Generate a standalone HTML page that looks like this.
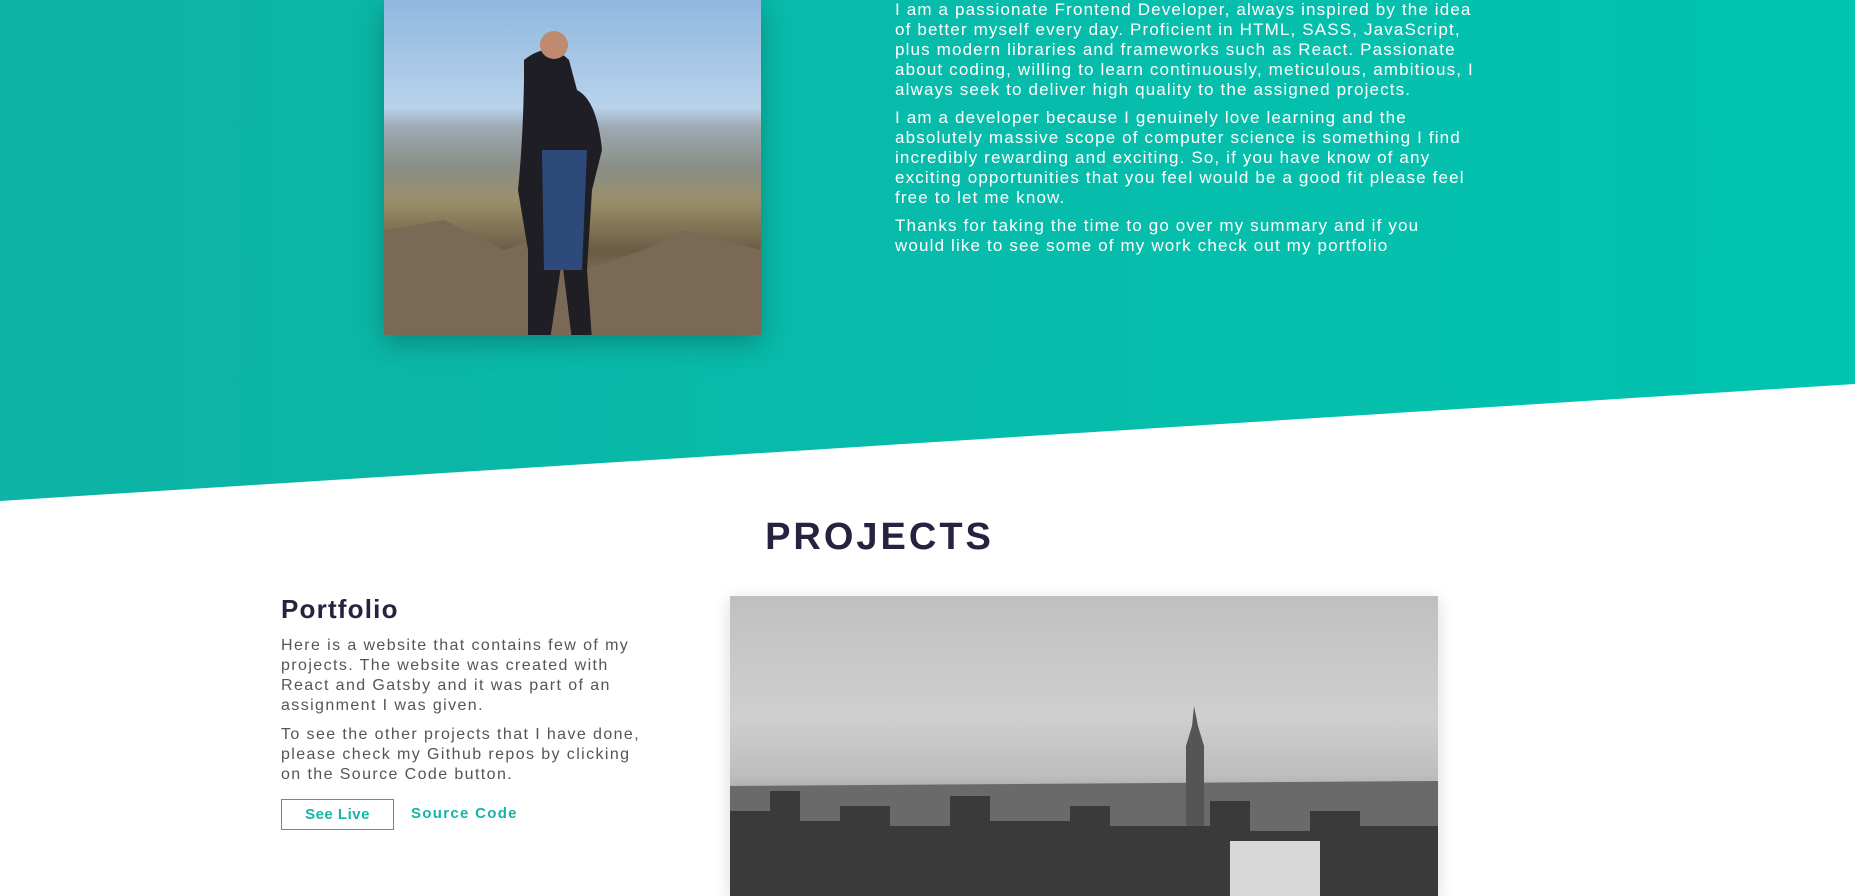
<!DOCTYPE html>
<html><head><meta charset="utf-8"><style>
*{margin:0;padding:0;box-sizing:border-box}
body{width:1855px;height:882px;overflow:hidden;background:#fff;font-family:"Liberation Sans",sans-serif;position:relative}
.bg{position:absolute;left:0;top:0}
.photo{position:absolute;left:384px;top:0;width:377px;height:335px;box-shadow:0 8px 24px rgba(0,0,0,.25);
background:linear-gradient(180deg,#8fb8e0 0%,#b9d2ea 32%,#9ea9b3 38%,#8a8f86 50%,#9a8f6a 60%,#6b5c45 75%,#8a7a68 88%,#5c5246 100%);overflow:hidden}
.about{position:absolute;left:895px;top:0;color:#fff;font-size:17px;line-height:20px;letter-spacing:1.15px;white-space:nowrap}
.about p{margin-bottom:8px}
h2{position:absolute;left:0;width:1759px;text-align:center;top:516px;font-size:38px;color:#25233f;letter-spacing:3px;font-weight:bold}
h3{position:absolute;left:281px;top:594px;font-size:26px;color:#25233f;letter-spacing:1.2px}
.desc{position:absolute;left:281px;top:636px;color:#555;font-size:16px;line-height:20px;letter-spacing:1.4px;white-space:nowrap}
.desc p{margin-bottom:9px}
.btn{position:absolute;top:799px;height:31px;font-size:15px;font-weight:bold;color:#13b5a6;line-height:29px;letter-spacing:.5px}
.city{position:absolute;left:730px;top:596px;width:708px;height:300px;box-shadow:0 4px 16px rgba(0,0,0,.15);
background:linear-gradient(180deg,#c0c0c0 0%,#cfcfcf 40%,#bdbdbd 60%,#8a8a8a 75%,#4a4a4a 90%,#333 100%);overflow:hidden}
</style></head><body>
<svg class="bg" width="1855" height="882"><defs><linearGradient id="g" x1="0" y1="0" x2="1" y2="0"><stop offset="0" stop-color="#0db3a4"/><stop offset="1" stop-color="#01c4b0"/></linearGradient></defs>
<polygon points="0,0 1855,0 1855,384 0,501" fill="url(#g)"/></svg>
<div class="photo"><svg width="377" height="335">
<path d="M0,230 L60,220 120,250 150,240 200,270 260,250 300,230 377,250 377,335 0,335Z" fill="#7a6a55"/>
<path d="M140,60 q25,-20 45,0 l8,30 q20,10 25,60 l-10,40 -5,80 5,70 h-20 l-10,-80 -12,80 h-22 l0,-90 -10,-60 q5,-50 6,-110z" fill="#1e1e24"/>
<path d="M158,150 h45 l-5,120 h-38z" fill="#2e4a7a"/>
<circle cx="170" cy="45" r="14" fill="#c08a70"/></svg></div>
<div class="about">
<p>I am a passionate Frontend Developer, always inspired by the idea<br>of better myself every day. Proficient in HTML, SASS, JavaScript,<br>plus modern libraries and frameworks such as React. Passionate<br>about coding, willing to learn continuously, meticulous, ambitious, I<br>always seek to deliver high quality to the assigned projects.</p>
<p>I am a developer because I genuinely love learning and the<br>absolutely massive scope of computer science is something I find<br>incredibly rewarding and exciting. So, if you have know of any<br>exciting opportunities that you feel would be a good fit please feel<br>free to let me know.</p>
<p>Thanks for taking the time to go over my summary and if you<br>would like to see some of my work check out my portfolio</p>
</div>
<h2>PROJECTS</h2>
<h3>Portfolio</h3>
<div class="desc">
<p>Here is a website that contains few of my<br>projects. The website was created with<br>React and Gatsby and it was part of an<br>assignment I was given.</p>
<p>To see the other projects that I have done,<br>please check my Github repos by clicking<br>on the Source Code button.</p>
</div>
<div class="btn" style="left:281px;width:113px;border:1.5px solid #13b5a6;text-align:center">See Live</div>
<div class="btn" style="left:411px;letter-spacing:1.3px">Source Code</div>
<div class="city"><svg width="708" height="300">
<path d="M0,190 L708,185 708,300 0,300Z" fill="#6a6a6a"/>
<path d="M456,250 L456,150 462,130 464,110 468,130 474,150 474,300 456,300Z" fill="#555"/>
<path d="M0,215 h40 v-20 h30 v30 h40 v-15 h50 v20 h60 v-30 h40 v25 h80 v-15 h40 v20 h100 v-25 h40 v30 h60 v-20 h50 v15 h78 V300 H0Z" fill="#3a3a3a"/>
<rect x="500" y="245" width="90" height="55" fill="#d8d8d8"/>
</svg></div>
</body></html>
